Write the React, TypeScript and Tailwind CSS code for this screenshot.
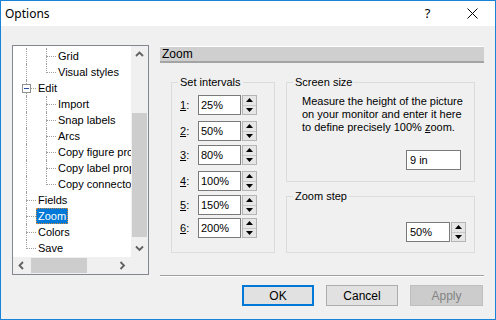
import React from 'react';

type TreeItem = {
    label: string;
    level: 0 | 1;
    v0: 'full' | 'half';
    v1?: 'full' | 'half';
    box?: boolean;
    selected?: boolean;
};

const items: TreeItem[] = [
    { label: 'Grid', level: 1, v0: 'full', v1: 'full' },
    { label: 'Visual styles', level: 1, v0: 'full', v1: 'half' },
    { label: 'Edit', level: 0, v0: 'full', box: true },
    { label: 'Import', level: 1, v0: 'full', v1: 'full' },
    { label: 'Snap labels', level: 1, v0: 'full', v1: 'full' },
    { label: 'Arcs', level: 1, v0: 'full', v1: 'full' },
    { label: 'Copy figure prop', level: 1, v0: 'full', v1: 'full' },
    { label: 'Copy label prop', level: 1, v0: 'full', v1: 'full' },
    { label: 'Copy connecto', level: 1, v0: 'full', v1: 'half' },
    { label: 'Fields', level: 0, v0: 'full' },
    { label: 'Zoom', level: 0, v0: 'full', selected: true },
    { label: 'Colors', level: 0, v0: 'full' },
    { label: 'Save', level: 0, v0: 'half' },
];

const intervals = [
    { n: '1', v: '25%', mt: 'mt-[6px]' },
    { n: '2', v: '50%', mt: 'mt-[6px]' },
    { n: '3', v: '80%', mt: 'mt-[4px]' },
    { n: '4', v: '100%', mt: 'mt-[6px]' },
    { n: '5', v: '150%', mt: 'mt-[4px]' },
    { n: '6', v: '200%', mt: 'mt-[3px]' },
];

function Chevron({ dir }: { dir: 'up' | 'down' | 'left' | 'right' }) {
    const pts = {
        up: '1,5 4.5,1.5 8,5',
        down: '1,1.5 4.5,5 8,1.5',
        left: '5,1 1.5,4.5 5,8',
        right: '1.5,1 5,4.5 1.5,8',
    }[dir];
    const vertical = dir === 'up' || dir === 'down';
    return (
        <svg width={vertical ? 9 : 7} height={vertical ? 7 : 9} viewBox={vertical ? '0 0 9 7' : '0 0 7 9'}>
            <polyline points={pts} fill="none" stroke="#606060" strokeWidth="1.8" />
        </svg>
    );
}

function TreeRow({ item }: { item: TreeItem }) {
    const dots = 'border-dotted border-[#a0a0a0]';
    return (
        <div className="flex h-4 items-center whitespace-nowrap">
            <div className="relative h-4 w-[23px] shrink-0">
                <div className={`absolute left-[13px] top-0 border-l ${dots} ${item.v0 === 'full' ? 'h-4' : 'h-[9px]'}`} />
                {item.level === 0 && (
                    <div className={`absolute left-[13px] top-[8px] w-[10px] border-t ${dots}`} />
                )}
                {item.box && (
                    <div className="absolute left-[9px] top-[4px] flex h-[9px] w-[9px] items-center justify-center border border-[#8e8f8f] bg-white">
                        <div className="h-px w-[5px] bg-[#2a4d9c]" />
                    </div>
                )}
            </div>
            {item.level === 1 && (
                <div className="relative h-4 w-[21px] shrink-0">
                    <div className={`absolute left-[10px] top-0 border-l ${dots} ${item.v1 === 'full' ? 'h-4' : 'h-[9px]'}`} />
                    <div className={`absolute left-[10px] top-[8px] w-[10px] border-t ${dots}`} />
                </div>
            )}
            <span
                className={
                    item.selected
                        ? 'border border-dotted border-[#d08a3a] bg-[#0078d7] px-[1px] leading-[14px] text-white'
                        : item.level === 0
                            ? 'px-[2px] leading-[16px]'
                            : 'pl-[1px] leading-[16px]'
                }
            >
                {item.label}
            </span>
        </div>
    );
}

function Spinner() {
    return (
        <div className="ml-[1px] flex h-[20px] w-[15px] flex-col border border-[#b4b4b4] bg-[#e6e6e6]">
            <div className="flex flex-1 items-center justify-center border-b border-[#c8c8c8]">
                <svg width="7" height="4" viewBox="0 0 7 4"><polygon points="0,4 3.5,0 7,4" fill="#000" /></svg>
            </div>
            <div className="flex flex-1 items-center justify-center">
                <svg width="7" height="4" viewBox="0 0 7 4"><polygon points="0,0 3.5,4 7,0" fill="#000" /></svg>
            </div>
        </div>
    );
}

export default function App() {
    return (
        <div className="flex h-[320px] w-[496px] flex-col border border-[#1883d7] bg-[#f0f0f0] font-['Liberation_Sans',Arial,sans-serif] text-[11px] text-black">
            {/* title bar */}
            <div className="flex h-[25px] shrink-0 items-center bg-white">
                <span className="flex-1 pl-[4px] font-['Noto_Sans',sans-serif] text-[12px]">Options</span>
                <div className="flex h-full w-[45px] items-center justify-center font-['Noto_Sans',sans-serif] text-[13px]">?</div>
                <div className="flex h-full w-[45px] items-center justify-center">
                    <svg width="11" height="11" viewBox="0 0 11 11">
                        <path d="M0.5 0.5 L10.5 10.5 M10.5 0.5 L0.5 10.5" stroke="#000" strokeWidth="1" />
                    </svg>
                </div>
            </div>

            <div className="flex flex-1">
                {/* tree */}
                <div className="ml-[11px] mt-[19px] flex h-[230px] w-[137px] flex-col border border-[#828790] bg-white">
                    <div className="flex h-[211px]">
                        <div className="w-[118px] overflow-hidden pt-[2px]">
                            {items.map(it => (
                                <TreeRow key={it.label} item={it} />
                            ))}
                        </div>
                        <div className="flex w-[17px] flex-col bg-[#f0f0f0]">
                            <div className="flex h-[17px] items-center justify-center"><Chevron dir="up" /></div>
                            <div className="flex-1 px-[1px] pt-[50px]">
                                <div className="h-[124px] bg-[#cdcdcd]" />
                            </div>
                            <div className="flex h-[17px] items-center justify-center"><Chevron dir="down" /></div>
                        </div>
                    </div>
                    <div className="flex h-[17px] bg-[#f0f0f0]">
                        <div className="flex w-[17px] items-center justify-center"><Chevron dir="left" /></div>
                        <div className="flex-1 py-[1px] pl-[1px]">
                            <div className="h-full w-[56px] bg-[#cdcdcd]" />
                        </div>
                        <div className="flex w-[17px] items-center justify-center"><Chevron dir="right" /></div>
                        <div className="w-[17px]" />
                    </div>
                </div>

                {/* right side */}
                <div className="ml-[11px] flex w-[324px] flex-col">
                    <div className="mt-[20px] flex h-[17px] items-center border-b-2 border-t border-b-[#a4a4a4] border-t-white bg-[#cfcfcf] pl-[2px] text-[12px]">
                        Zoom
                    </div>

                    <div className="mt-[13px] flex">
                        <fieldset className="ml-[11px] h-[177px] w-[104px] border border-[#dcdcdc]">
                            <legend className="ml-[6px] px-[2px] leading-[13px]">Set intervals</legend>
                            {intervals.map(r => (
                                <div key={r.n} className={`${r.mt} flex h-[20px] items-center pl-[8px]`}>
                                    <span className="w-[18px]"><span className="underline">{r.n}</span>:</span>
                                    <div className="flex h-[20px] w-[43px] items-center border border-[#7a7a7a] bg-white pl-[2px]">{r.v}</div>
                                    <Spinner />
                                </div>
                            ))}
                        </fieldset>

                        <div className="ml-[11px] flex w-[189px] flex-col">
                            <fieldset className="h-[106px] border border-[#dcdcdc]">
                                <legend className="ml-[6px] px-[2px] leading-[13px]">Screen size</legend>
                                <p className="mt-[6px] pl-[15px] leading-[13px]">
                                    Measure the height of the picture<br />
                                    on your monitor and enter it here<br />
                                    to define precisely 100% <span className="underline">z</span>oom.
                                </p>
                                <div className="mt-[16px] flex justify-end pr-[13px]">
                                    <div className="flex h-[20px] w-[55px] items-center border border-[#7a7a7a] bg-white pl-[3px]">9 in</div>
                                </div>
                            </fieldset>
                            <fieldset className="mt-[8px] h-[63px] border border-[#dcdcdc]">
                                <legend className="ml-[6px] px-[2px] leading-[13px]">Zoom step</legend>
                                <div className="mt-[19px] flex justify-end pr-[8px]">
                                    <div className="flex h-[20px] w-[44px] items-center border border-[#7a7a7a] bg-white pl-[3px]">50%</div>
                                    <Spinner />
                                </div>
                            </fieldset>
                        </div>
                    </div>

                    <div className="mt-[22px] h-[2px] border-b border-t border-b-white border-t-[#a0a0a0]" />

                    <div className="mt-[8px] flex justify-end gap-[12px] pr-[1px] text-[12px]">
                        <button className="flex h-[21px] w-[72px] items-center justify-center border-2 border-[#0078d7] bg-[#e1e1e1]">OK</button>
                        <button className="flex h-[21px] w-[72px] items-center justify-center border border-[#adadad] bg-[#e1e1e1]">Cancel</button>
                        <button className="flex h-[21px] w-[73px] items-center justify-center border border-[#bfbfbf] bg-[#cccccc] text-[#838383]">Apply</button>
                    </div>
                </div>
            </div>
        </div>
    );
}
